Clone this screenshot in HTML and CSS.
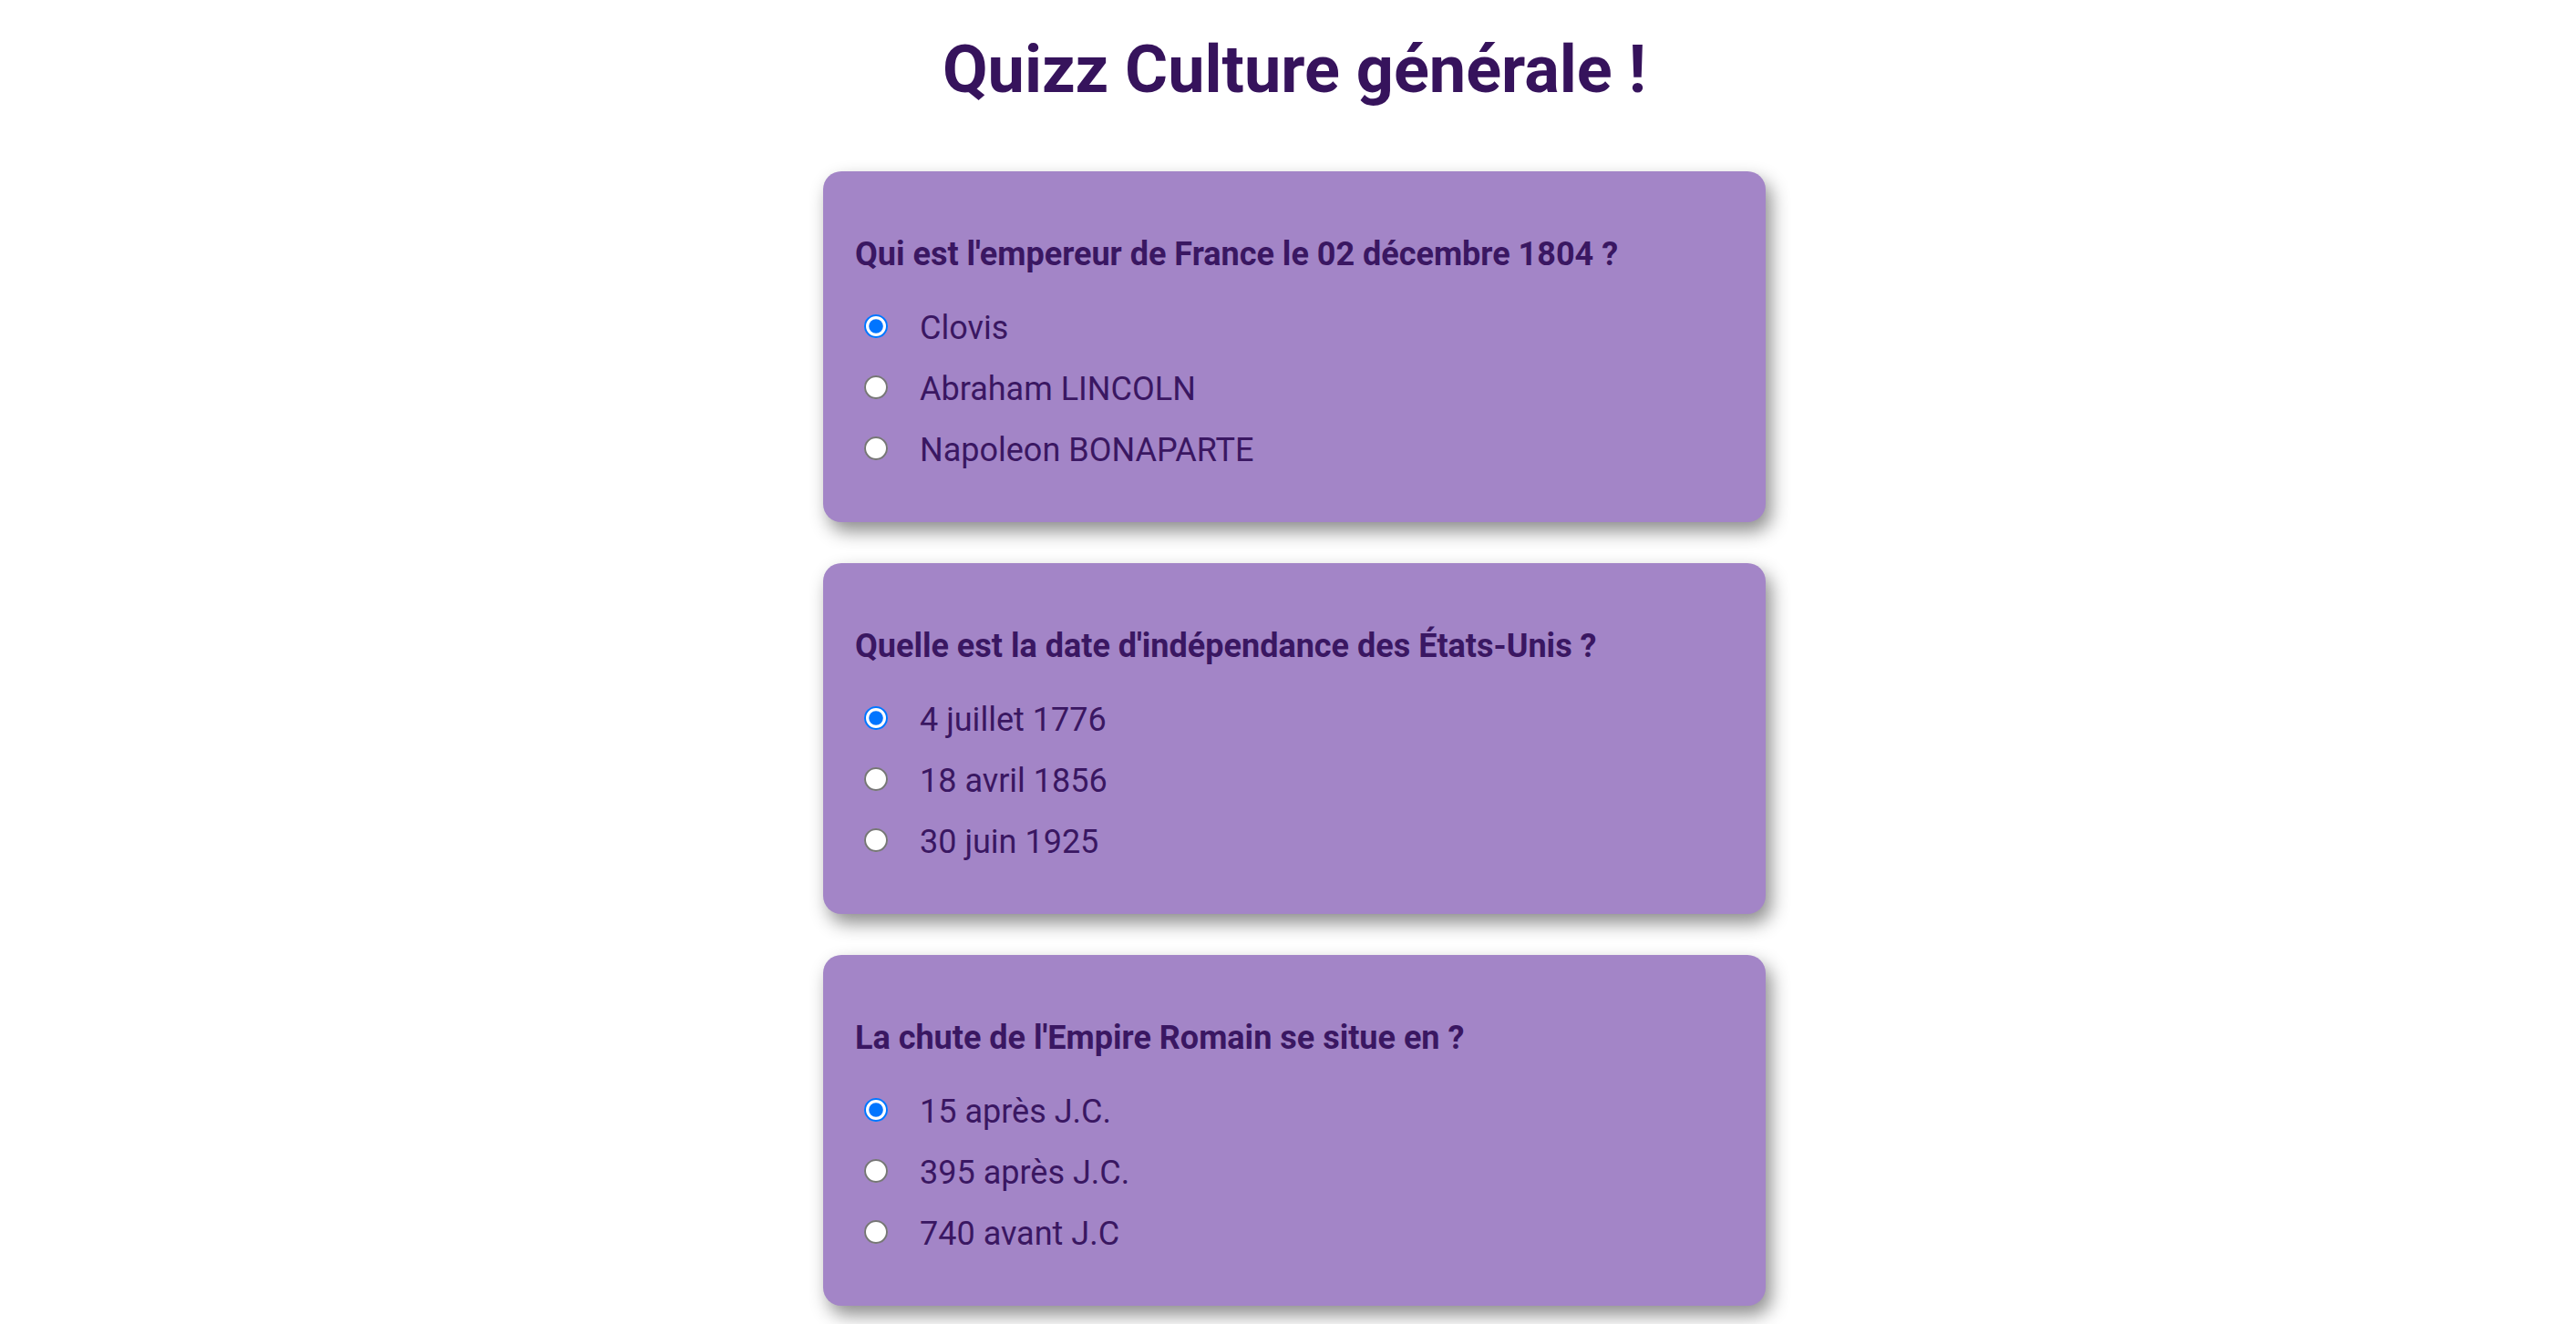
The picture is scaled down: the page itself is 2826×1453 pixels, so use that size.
FILE: index.html
```html
<!DOCTYPE html>
<html lang="fr">
<head>
<meta charset="utf-8">
<title>Quizz Culture générale</title>
<link rel="stylesheet" href="styles.css">
</head>
<body>
<main class="page">
  <h1 class="title">Quizz Culture générale !</h1>
  <form class="quiz">
    <section class="card">
      <h3 class="question">Qui est l'empereur de France le 02 décembre 1804 ?</h3>
      <label class="option"><input type="radio" name="q1" checked><span>Clovis</span></label>
      <label class="option"><input type="radio" name="q1"><span>Abraham LINCOLN</span></label>
      <label class="option"><input type="radio" name="q1"><span>Napoleon BONAPARTE</span></label>
    </section>
    <section class="card">
      <h3 class="question">Quelle est la date d'indépendance des États-Unis ?</h3>
      <label class="option"><input type="radio" name="q2" checked><span>4 juillet 1776</span></label>
      <label class="option"><input type="radio" name="q2"><span>18 avril 1856</span></label>
      <label class="option"><input type="radio" name="q2"><span>30 juin 1925</span></label>
    </section>
    <section class="card">
      <h3 class="question">La chute de l'Empire Romain se situe en ?</h3>
      <label class="option"><input type="radio" name="q3" checked><span>15 après J.C.</span></label>
      <label class="option"><input type="radio" name="q3"><span>395 après J.C.</span></label>
      <label class="option"><input type="radio" name="q3"><span>740 avant J.C</span></label>
    </section>
  </form>
</main>
</body>
</html>
```
FILE: styles.css
```css
html, body {
  margin: 0;
  padding: 0;
  background: #ffffff;
}

body {
  font-family: Roboto, "Liberation Sans", Arial, sans-serif;
  color: #3a1762;
}

.page {
  padding-left: 14px;
  display: flex;
  flex-direction: column;
  align-items: center;
  padding-bottom: 60px;
}

.title {
  margin: 35px 0 0;
  font-size: 72px;
  font-weight: 700;
  color: #36135c;
  line-height: 84px;
}

.quiz {
  margin-top: 69px;
  display: flex;
  flex-direction: column;
  gap: 45px;
}

.card {
  width: 1034px;
  box-sizing: border-box;
  background: #a385c7;
  border-radius: 20px;
  padding: 70px 35px 46px;
  box-shadow: 6px 10px 20px rgba(0, 0, 0, 0.45);
  display: flex;
  flex-direction: column;
}

.question {
  margin: 0 0 26px;
  font-size: 36px;
  font-weight: 700;
  line-height: 42px;
  color: #3a1762;
}

.option {
  height: 67px;
  display: flex;
  align-items: center;
  font-size: 36px;
  line-height: 42px;
  color: #3a1762;
}

.option input {
  zoom: 2;
  width: 13px;
  height: 13px;
  margin: 0 17.5px 2px 5px;
  flex: none;
}
```
